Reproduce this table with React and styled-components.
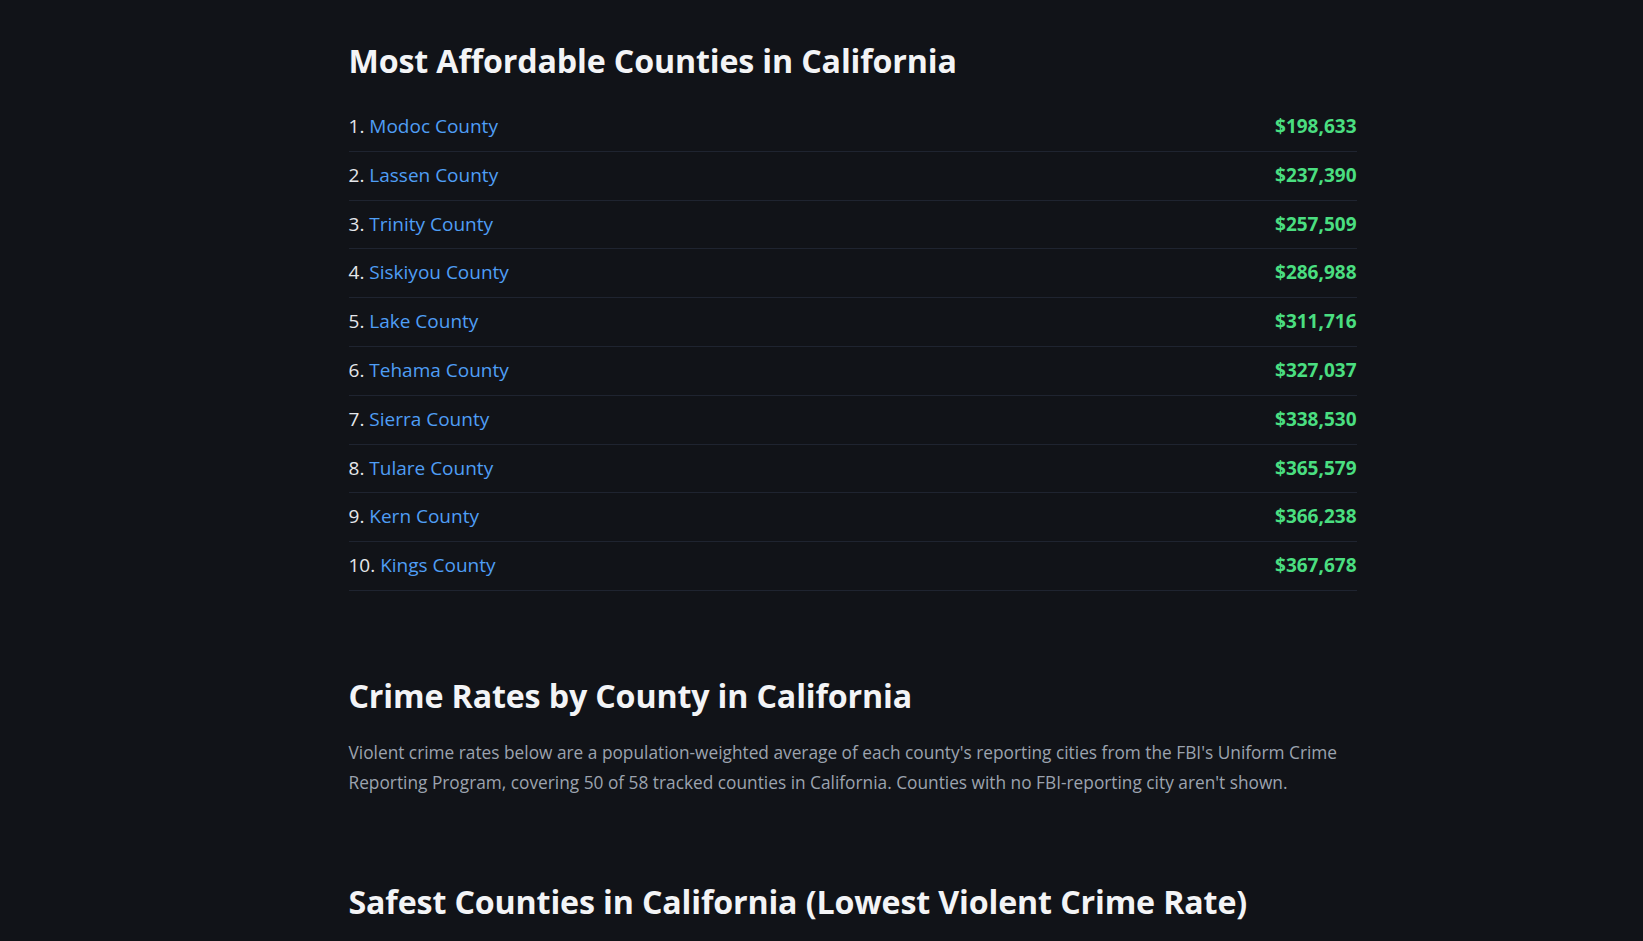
import styled, { createGlobalStyle } from 'styled-components';

const GlobalStyle = createGlobalStyle`
  html, body {
    margin: 0;
    padding: 0;
    background: #111318;
  }
  body {
    font-family: "Open Sans", "Noto Sans", "Liberation Sans", sans-serif;
    color: #e5e7eb;
  }
`;

const Page = styled.main`
  width: 1008px;
  margin-left: calc(50% - 473px);
  padding: 41px 0 40px;
`;

const Section = styled.section`
  & + & {
    margin-top: 85px;
  }
  &:last-child {
    margin-top: 84px;
  }
`;

const Heading = styled.h2`
  margin: 0 0 20px;
  font-size: 32.2px;
  line-height: 40px;
  font-weight: 700;
  color: #f3f4f6;
  letter-spacing: -0.15px;
`;

const List = styled.ol`
  list-style: none;
  margin: 0;
  padding: 2px 0 0;
`;

const Row = styled.li`
  display: flex;
  justify-content: space-between;
  align-items: center;
  padding: 10px 0;
  line-height: 27.8px;
  font-size: 19px;
  border-bottom: 1px solid #1f2430;
`;

const Rank = styled.span`
  color: #e5e7eb;
`;

const CountyLink = styled.a`
  color: #4f9ef5;
  text-decoration: none;
`;

const Price = styled.span`
  color: #4ade80;
  font-weight: 700;
`;

const Text = styled.p`
  margin: 0;
  padding-top: 2px;
  font-size: 17.3px;
  line-height: 30px;
  color: #9ca3af;
`;

const counties = [
  ['Modoc County', '$198,633'],
  ['Lassen County', '$237,390'],
  ['Trinity County', '$257,509'],
  ['Siskiyou County', '$286,988'],
  ['Lake County', '$311,716'],
  ['Tehama County', '$327,037'],
  ['Sierra County', '$338,530'],
  ['Tulare County', '$365,579'],
  ['Kern County', '$366,238'],
  ['Kings County', '$367,678'],
];

const App = () => {
  return (
    <>
      <GlobalStyle />
      <Page>
        <Section>
          <Heading>Most Affordable Counties in California</Heading>
          <List>
            {counties.map(([name, price], i) => (
              <Row key={name}>
                <span>
                  <Rank>{i + 1}. </Rank>
                  <CountyLink href="#">{name}</CountyLink>
                </span>
                <Price>{price}</Price>
              </Row>
            ))}
          </List>
        </Section>
        <Section>
          <Heading>Crime Rates by County in California</Heading>
          <Text>
            Violent crime rates below are a population-weighted average of each county's reporting cities from the FBI's Uniform Crime Reporting Program, covering 50 of 58 tracked counties in California. Counties with no FBI-reporting city aren't shown.
          </Text>
        </Section>
        <Section>
          <Heading>Safest Counties in California (Lowest Violent Crime Rate)</Heading>
        </Section>
      </Page>
    </>
  );
};

export default App;
